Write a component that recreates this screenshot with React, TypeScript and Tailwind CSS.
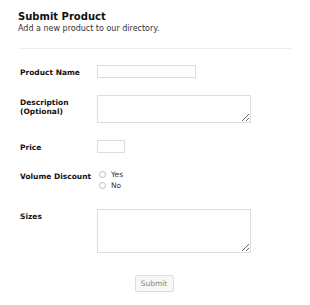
import React from "react";

function Row({ label, children, className = "" }: { label: React.ReactNode; children: React.ReactNode; className?: string }) {
    return (
        <div className={`flex items-start ${className}`}>
            <label className="w-[79px] shrink-0 pl-[2px] pt-[3px] text-[7.5px] font-bold leading-[9px] text-[#111]">{label}</label>
            <div>{children}</div>
        </div>
    );
}

function Radio({ text }: { text: string }) {
    return (
        <label className="flex items-center gap-[5px] h-[11px] pl-[2px]">
            <span className="w-[7px] h-[7px] rounded-full border border-[#bbb] bg-white" />
            <span className="text-[7.5px] text-[#333]">{text}</span>
        </label>
    );
}

export default function App() {
    return (
        <div className="w-[310px] h-[305px] bg-white pl-[18px] pr-[19px] pt-[10px]" style={{ fontFamily: '"DejaVu Sans", Verdana, sans-serif' }}>
            {/* Encabezado */}
            <h1 className="text-[10px] font-bold leading-[13px] text-[#111]">Submit Product</h1>
            <p className="text-[8px] leading-[10px] text-[#333] mt-[1px]">Add a new product to our directory.</p>
            <hr className="border-t border-[#eee] mt-[14px] mb-[16px]" />

            {/* Formulario */}
            <form className="flex flex-col">
                <Row label="Product Name" className="mb-[17px]">
                    <input className="block w-[99px] h-[13px] border border-[#ddd] bg-white" />
                </Row>
                <Row label={<>Description<br />(Optional)</>} className="mb-[17px]">
                    <textarea className="block w-[154px] h-[28px] border border-[#ddd] bg-white" />
                </Row>
                <Row label="Price" className="mb-[16px]">
                    <input className="block w-[28px] h-[13px] border border-[#ddd] bg-white" />
                </Row>
                <Row label="Volume Discount" className="mb-[18px]">
                    <Radio text="Yes" />
                    <Radio text="No" />
                </Row>
                <Row label="Sizes" className="mb-[22px]">
                    <textarea className="block w-[154px] h-[44px] border border-[#ddd] bg-white" />
                </Row>
                <div className="flex justify-center pr-[1px]">
                    <button type="button" className="w-[39px] h-[17px] border border-[#ddd] rounded-[2px] bg-[#f7f7f7] text-[7.5px] text-[#888]">Submit</button>
                </div>
            </form>
        </div>
    );
}
